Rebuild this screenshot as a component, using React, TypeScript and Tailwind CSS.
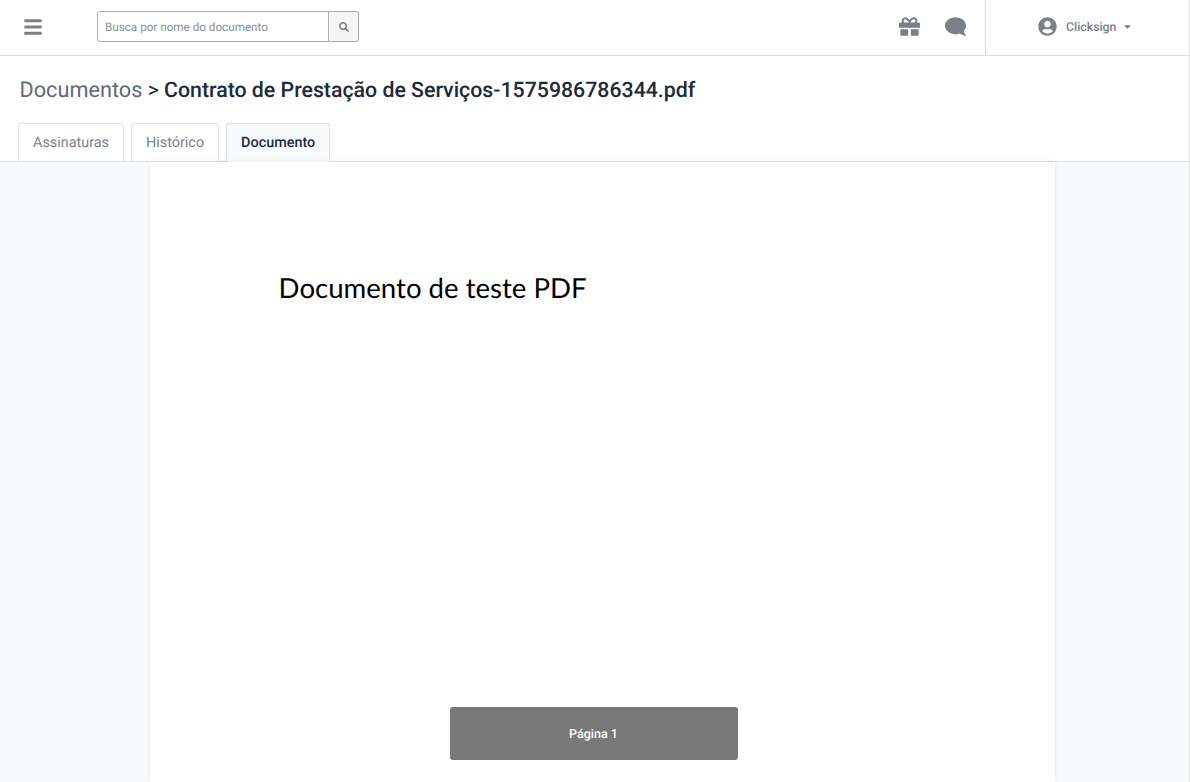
import React from 'react';
import { FaBars, FaGift, FaComment, FaUserCircle, FaSearch, FaCaretDown } from 'react-icons/fa';

const tabs = ['Assinaturas', 'Histórico', 'Documento'];

const App: React.FC = () => {
  return (
    <div className="h-[782px] w-[1190px] overflow-hidden border-r border-[#dcdfe3] bg-white font-['Roboto',sans-serif] [text-rendering:geometricPrecision]">
      {/* Top bar */}
      <header className="flex h-[56px] items-center border-b border-[#dcdcdc] bg-white">
        <div className="flex w-[97px] shrink-0 pl-[23px]">
          <FaBars className="-translate-y-[1px] text-[#7b8088]" size={20} />
        </div>
        <div className="flex h-[31px] w-[262px] -translate-y-[1px]">
          <div className="flex flex-1 items-center rounded-l-[3px] border border-[#a9adb5] pl-[7px] pt-[2px] text-[11.7px] text-[#8a8f97]">
            Busca por nome do documento
          </div>
          <div className="flex w-[30px] items-center justify-center rounded-r-[3px] border border-l-0 border-[#a9adb5] bg-[#f5f5f5]">
            <FaSearch className="text-[#7b8088]" size={10} />
          </div>
        </div>
        <div className="ml-auto flex h-full items-center">
          <FaGift className="mr-[25px] -translate-y-[1px] text-[#7b8088]" size={21} />
          <FaComment className="mr-[19px] -translate-y-[1px] -scale-x-100 text-[#7b8088]" size={21} />
          <div className="flex h-full w-[204px] items-center border-l border-[#dcdcdc] pl-[52px]">
            <FaUserCircle className="mr-[9px] -translate-y-[1px] text-[#7b8088]" size={19} />
            <span className="pt-[2px] text-[12.3px] font-medium text-[#7b8088]">Clicksign</span>
            <FaCaretDown className="ml-[6px] -translate-y-[1px] text-[#7b8088]" size={11} />
          </div>
        </div>
      </header>

      {/* Title + tabs */}
      <div className="flex h-[106px] flex-col justify-between border-b border-[#dcdfe3] bg-white">
        <h1 className="pl-[19.5px] pt-[21px] text-[21.3px] leading-[28px] text-[#1c2b3a]">
          <span className="text-[21.7px] text-[#616b78]">Documentos</span>
          <span> &gt; </span>
          <span className="font-medium">Contrato de Prestação de Serviços-1575986786344.pdf</span>
        </h1>
        <nav className="-mb-px flex gap-[7px] pl-[18px]">
          {tabs.map((tab) => (
            <div
              key={tab}
              className={
                tab === 'Documento'
                  ? 'flex h-[39px] items-center rounded-t-[3px] border border-b-0 border-[#dcdfe3] bg-[#f9fafc] px-[14px] text-[14.4px] font-medium text-[#1c2b3a]'
                  : 'flex h-[39px] items-center rounded-t-[3px] border border-[#dcdfe3] bg-white px-[14px] pt-[1px] text-[14.4px] text-[#7b8088]'
              }
            >
              {tab}
            </div>
          ))}
        </nav>
      </div>

      {/* Viewer */}
      <main className="flex h-[620px] justify-start bg-[#f9fafc] pl-[150px]">
        <div className="flex h-full w-[905px] flex-col bg-white shadow-[0_0_4px_rgba(0,0,0,0.1)]">
          <p className="pl-[128.6px] pt-[107px] font-['Lato',sans-serif] text-[27.6px] leading-[38px] text-black">
            Documento de teste PDF
          </p>
          <div className="ml-[300px] mt-[400px] flex h-[53px] w-[288px] items-center justify-center rounded-[3px] bg-[#797979] pr-[1px] pt-[3px] text-[12.5px] font-medium text-white">
            Página 1
          </div>
        </div>
      </main>
    </div>
  );
};

export default App;
